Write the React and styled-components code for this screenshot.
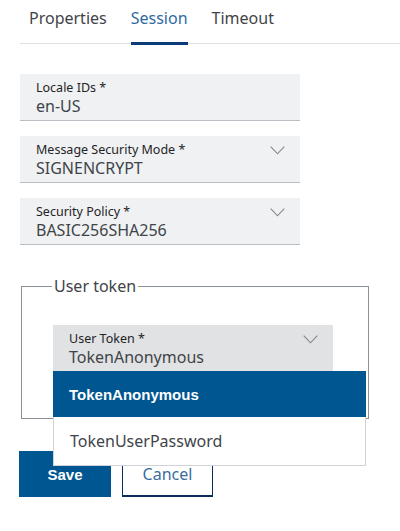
import styled, { createGlobalStyle } from "styled-components";

const GlobalStyle = createGlobalStyle`
  body {
    margin: 0;
    background: #fff;
    font-family: "Noto Sans", "Open Sans", sans-serif;
    color: #3f4449;
  }
`;

function Chevron() {
  return (
    <ChevronSvg width="15" height="9" viewBox="0 0 15 9">
      <path d="M0.7 0.7 L7.5 7.8 L14.3 0.7" fill="none" stroke="#80868c" strokeWidth="1.1" />
    </ChevronSvg>
  );
}

function Field({ label, value, select, dark }) {
  return (
    <FieldBox $dark={dark}>
      <Label>{label}</Label>
      <Value>{value}</Value>
      {select && <Chevron />}
    </FieldBox>
  );
}

export default function App() {
  return (
    <Page>
      <GlobalStyle />
      <Tabs>
        <Tab>Properties</Tab>
        <Tab $active>Session</Tab>
        <Tab>Timeout</Tab>
      </Tabs>

      <Fields>
        <Field label="Locale IDs *" value="en-US" />
        <Field label="Message Security Mode *" value="SIGNENCRYPT" select />
        <Field label="Security Policy *" value="BASIC256SHA256" select />
      </Fields>

      <Group>
        <Legend>User token</Legend>
        <SelectWrap>
          <Field label="User Token *" value="TokenAnonymous" select dark />
          <Menu>
            <Option $selected>TokenAnonymous</Option>
            <Option>TokenUserPassword</Option>
          </Menu>
        </SelectWrap>
      </Group>

      <Buttons>
        <PrimaryButton>Save</PrimaryButton>
        <SecondaryButton>Cancel</SecondaryButton>
      </Buttons>
    </Page>
  );
}

const Page = styled.div`
  width: 400px;
  height: 531px;
  box-sizing: border-box;
  padding: 0 0 0 20px;
`;

const Tabs = styled.div`
  display: flex;
  gap: 24px;
  padding-left: 9px;
  border-bottom: 1px solid #dfe2e4;
  height: 44px;
  box-sizing: border-box;
`;

const Tab = styled.div`
  font-size: 16px;
  line-height: 20px;
  padding-top: 8px;
  color: ${(p) => (p.$active ? "#2e6aa0" : "#3f4449")};
  border-bottom: 3px solid ${(p) => (p.$active ? "#0b3c78" : "transparent")};
  margin-bottom: -1px;
  box-sizing: border-box;
  height: 45px;
`;

const Fields = styled.div`
  display: flex;
  flex-direction: column;
  gap: 15px;
  margin-top: 30px;
`;

const FieldBox = styled.div`
  position: relative;
  width: 280px;
  height: 47px;
  box-sizing: border-box;
  background: ${(p) => (p.$dark ? "#e0e2e4" : "#eff1f2")};
  border-bottom: 1px solid ${(p) => (p.$dark ? "#e0e2e4" : "#b8bec3")};
  padding: 6px 16px 0 16px;
`;

const Label = styled.div`
  font-size: 12.5px;
  line-height: 15px;
  height: 15px;
  color: #1f2326;
`;

const Value = styled.div`
  font-size: 16px;
  line-height: 18px;
  margin-top: 2px;
  color: #3f4449;
`;

const ChevronSvg = styled.svg`
  position: absolute;
  right: 15px;
  top: 10px;
`;

const Group = styled.fieldset`
  margin: 32px 0 0 1px;
  width: 348px;
  height: 142px;
  box-sizing: border-box;
  border: 1px solid #8a9097;
  padding: 0;
  position: relative;
`;

const Legend = styled.legend`
  margin-left: 30px;
  padding: 0 2px;
  font-size: 16px;
  line-height: 18px;
  color: #3f4449;
`;

const SelectWrap = styled.div`
  position: relative;
  margin: 30px 0 0 31px;
  width: 280px;
`;

const Menu = styled.div`
  position: absolute;
  top: 46px;
  left: 0;
  width: 313px;
  background: #fff;
  border: 1px solid #d0d4d8;
  border-top: none;
  box-sizing: border-box;
  z-index: 2;
`;

const Option = styled.div`
  height: ${(p) => (p.$selected ? "46px" : "48px")};
  display: flex;
  align-items: center;
  padding-left: 16px;
  font-size: ${(p) => (p.$selected ? "15px" : "16px")};
  background: ${(p) => (p.$selected ? "#005691" : "#fff")};
  color: ${(p) => (p.$selected ? "#fff" : "#3f4449")};
  font-weight: ${(p) => (p.$selected ? 700 : 400)};
  font-family: ${(p) =>
    p.$selected ? '"Liberation Sans", Arial, sans-serif' : '"Noto Sans", sans-serif'};
  margin: ${(p) => (p.$selected ? "0 -1px" : "0")};
`;

const Buttons = styled.div`
  display: flex;
  gap: 11px;
  margin: 32px 0 0 -1px;
`;

const PrimaryButton = styled.button`
  width: 92px;
  height: 46px;
  border: none;
  background: #005691;
  color: #fff;
  font-family: "Liberation Sans", Arial, sans-serif;
  font-weight: 700;
  font-size: 15px;
  padding: 0;
`;

const SecondaryButton = styled.button`
  width: 91px;
  height: 46px;
  border: 1px solid #0b2a5e;
  border-bottom-width: 2px;
  background: #fff;
  color: #3a6d9e;
  font-family: "Noto Sans", sans-serif;
  font-size: 16px;
  padding: 0;
`;
